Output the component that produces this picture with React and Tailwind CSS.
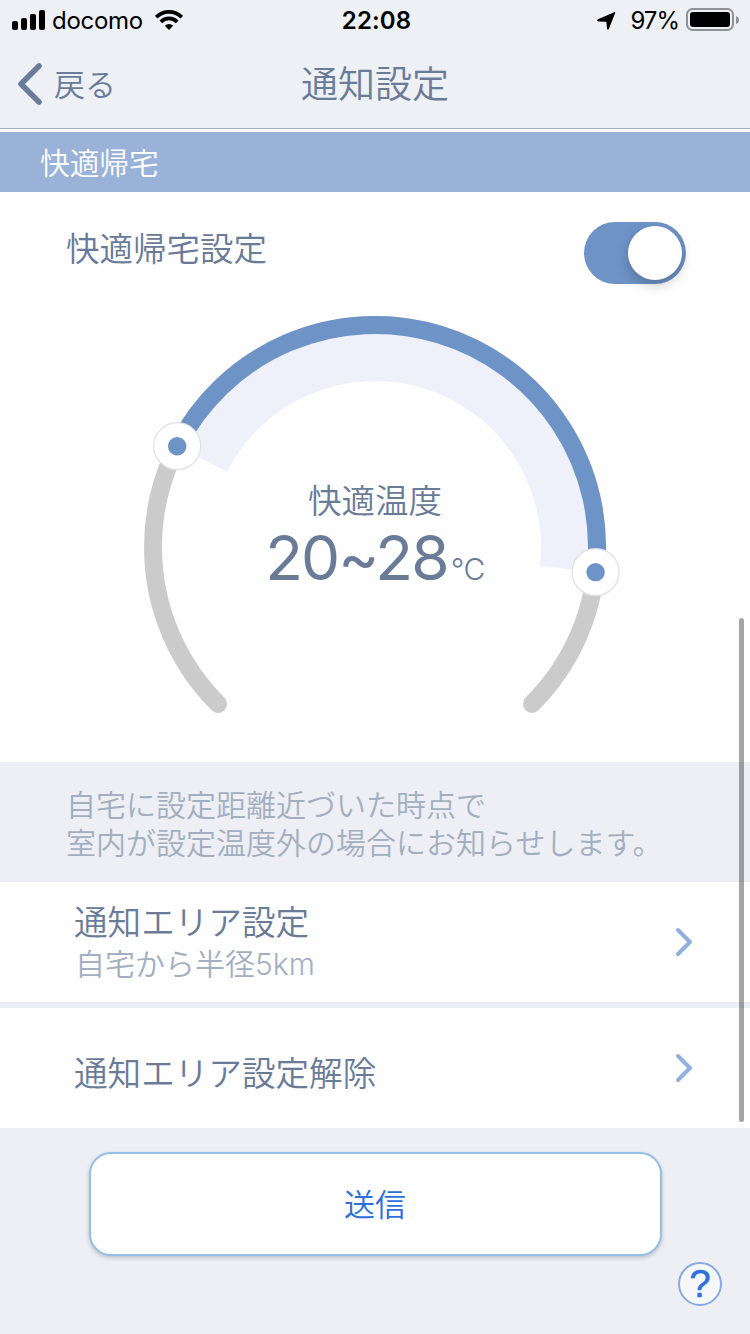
import { useState } from 'react';

function StatusBar() {
  return (
    <div className="grid h-10 grid-cols-3 items-center font-['Inter',sans-serif] text-[24px] leading-none font-normal text-black">
      <div className="flex items-center pl-3">
        <svg width="33" height="20" viewBox="0 0 33 20">
          <rect x="0" y="11" width="6" height="9" rx="2" />
          <rect x="9" y="8" width="6" height="12" rx="2" />
          <rect x="18" y="4" width="6" height="16" rx="2" />
          <rect x="27" y="0" width="6" height="20" rx="2" />
        </svg>
        <span className="ml-[7px] pt-[2px] tracking-[-0.3px]">docomo</span>
        <svg className="ml-3" width="28" height="20" viewBox="0 0 28 20" fill="none" stroke="#000" strokeWidth="3.8">
          <path d="M1.2 7.2a18 18 0 0 1 25.6 0" />
          <path d="M5.8 11.8a11.6 11.6 0 0 1 16.4 0" />
          <path d="M14 20l-4.2-4.2a6 6 0 0 1 8.4 0z" fill="#000" stroke="none" />
        </svg>
      </div>
      <span className="pt-[2px] pl-[3px] text-center font-semibold tracking-[0.1px]">22:08</span>
      <div className="flex items-center justify-end pr-[11px]">
        <svg width="20" height="20" viewBox="0 0 20 20">
          <path d="M18.2 2.2Q19.6 1.8 19.1 3.2L13 18.6Q11.8 20.8 11 18.4L10.4 12.2Q10.4 11.8 10 11.8L2.4 11.4Q0 10.4 2 9.3z" />
        </svg>
        <span className="ml-[14px] pt-[2px] tracking-[-1px]">97%</span>
        <svg className="ml-[7px]" width="53" height="24" viewBox="0 0 53 24">
          <rect x="1" y="1" width="46" height="21" rx="5.5" fill="none" stroke="#8f9295" strokeWidth="2" />
          <rect x="4" y="4" width="40" height="15" rx="3" />
          <path d="M50 8q3 1 3 4t-3 4z" fill="#8f9295" />
        </svg>
      </div>
    </div>
  );
}

function NavBar() {
  return (
    <div className="grid h-22 grid-cols-[1fr_auto_1fr] items-center text-[#6a7b97]">
      <button className="flex items-center pl-[17px] text-[31px] leading-none">
        <svg width="26" height="42" viewBox="0 0 26 42" fill="none" stroke="currentColor" strokeWidth="5.5" strokeLinecap="round" strokeLinejoin="round">
          <path d="M22 3L4 21l18 18" />
        </svg>
        <span className="ml-[11px] pb-[4px]">戻る</span>
      </button>
      <h1 className="pb-[4px] text-[37px] leading-none">通知設定</h1>
    </div>
  );
}

function Toggle({ checked, onChange }) {
  return (
    <button
      role="switch"
      aria-checked={checked}
      onClick={() => onChange(!checked)}
      className={`flex h-[62px] w-[102px] items-center rounded-full px-1 ${checked ? 'justify-end bg-[#6e93c7]' : 'justify-start bg-[#cbcbcb]'}`}
    >
      <span className="size-[54px] rounded-full bg-white shadow-[0_5px_12px_rgba(0,0,0,0.22)]" />
    </button>
  );
}

const CENTER = { x: 235, y: 235 };
const RADIUS = 222;

// Angles are in degrees, clockwise from three o'clock
function point(angle, r) {
  const rad = (angle * Math.PI) / 180;
  return { x: CENTER.x + r * Math.cos(rad), y: CENTER.y + r * Math.sin(rad) };
}

function arc(from, to, r) {
  const a = point(from, r);
  const b = point(to, r);
  return `M${a.x} ${a.y}A${r} ${r} 0 ${to - from > 180 ? 1 : 0} 1 ${b.x} ${b.y}`;
}

function Knob({ angle }) {
  const { x, y } = point(angle, RADIUS);
  return (
    <g>
      <circle cx={x} cy={y} r="23.5" fill="#fff" stroke="#e2e2e2" strokeWidth="1.3" />
      <circle cx={x} cy={y} r="9.2" fill="#6e93c7" />
    </g>
  );
}

function TemperatureDial({ low, high }) {
  const start = 207;
  const end = 366.5;

  return (
    <div className="grid justify-center pt-[28px]">
      <svg className="col-start-1 row-start-1" width="490" height="420" viewBox="-10 0 490 420" fill="none">
        <path d={arc(135, 405, RADIUS)} stroke="#cbcbcb" strokeWidth="18" strokeLinecap="round" />
        <path d={arc(start, end, 190)} stroke="#eef1f9" strokeWidth="48" />
        <path d={arc(start, end, RADIUS)} stroke="#6e93c7" strokeWidth="18" />
        <Knob angle={start} />
        <Knob angle={end} />
      </svg>
      <div className="col-start-1 row-start-1 flex flex-col items-center pt-[169px] text-[#6a7b97]">
        <span className="text-[33.5px] leading-[36px]">快適温度</span>
        <div className="mt-[7px] flex items-baseline font-['Inter',sans-serif] leading-[68px]">
          <span className="text-[62px] font-normal tracking-[-1.9px]">{low}~{high}</span>
          <span className="ml-[3px] text-[30px] tracking-[-0.5px]">°C</span>
        </div>
      </div>
    </div>
  );
}

function MenuRow({ title, detail }) {
  return (
    <button className="flex h-[120px] w-full items-center justify-between bg-[#fefefe] pr-[57px] pl-[74px] text-left">
      <div className="flex flex-col">
        <span className={`text-[33.6px] leading-[44px] text-[#6a7b97] ${detail ? '' : 'pt-2'}`}>{title}</span>
        {detail && <span className="pl-px font-['Inter','Noto_Sans_CJK_JP',sans-serif] text-[30px] leading-[42px] text-[#a3afc1]">{detail}</span>}
      </div>
      <svg width="18" height="30" viewBox="0 0 18 30" fill="none" stroke="#90afdc" strokeWidth="4" strokeLinecap="round" strokeLinejoin="round">
        <path d="M3 3l12 12L3 27" />
      </svg>
    </button>
  );
}

function App() {
  const [enabled, setEnabled] = useState(true);

  return (
    <div className="relative h-[1334px] w-[750px] overflow-hidden bg-[#edeff4] font-['Noto_Sans_CJK_JP',sans-serif] font-[350]">
      <header className="h-[129px] border-b border-[#a2afbf] bg-[#edf0f4]">
        <StatusBar />
        <NavBar />
      </header>

      <div className="border-t-3 border-white bg-[#9ab2d8]">
        <h2 className="flex h-[60px] items-center pb-px pl-[40px] text-[29.7px] leading-none text-white">快適帰宅</h2>
      </div>

      {/* Comfort temperature */}
      <section className="h-[570px] bg-[#fefefe] pt-[30px]">
        <div className="flex items-center justify-between pr-16 pl-[66px]">
          <span className="pb-[12px] text-[33.5px] leading-none text-[#6a7b97]">快適帰宅設定</span>
          <Toggle checked={enabled} onChange={setEnabled} />
        </div>
        <TemperatureDial low={20} high={28} />
      </section>

      <p className="h-[120px] pt-[22px] pl-[66px] text-[30px] leading-[38px] text-[#a3afc1]">
        自宅に設定距離近づいた時点で<br />
        室内が設定温度外の場合にお知らせします。
      </p>

      <div className="flex flex-col gap-[6px] bg-[#ebeff5]">
        <MenuRow title="通知エリア設定" detail="自宅から半径5km" />
        <MenuRow title="通知エリア設定解除" />
      </div>

      <div className="flex justify-center pt-6">
        <button className="h-[104px] w-[573px] rounded-[22px] border-2 border-[#92bfe8] bg-white pb-[4px] text-[31px] leading-none text-[#2d70dc] shadow-[0_2px_4px_rgba(0,0,0,0.2)]">
          送信
        </button>
      </div>

      {/* Floating help button */}
      <button className="absolute right-7 bottom-7 flex size-11 items-center justify-center rounded-full border-2 border-[#84aae4] bg-[#f6f7f9] font-['Liberation_Sans',sans-serif] text-[38px] leading-none font-normal text-[#2d70dc]">
        <span className="[-webkit-text-stroke:0.6px_currentColor]">?</span>
      </button>

      {/* Scroll indicator */}
      <div className="absolute top-[618px] right-[6px] h-[504px] w-[5px] rounded-full bg-black/35" />
    </div>
  );
}

export default App;
